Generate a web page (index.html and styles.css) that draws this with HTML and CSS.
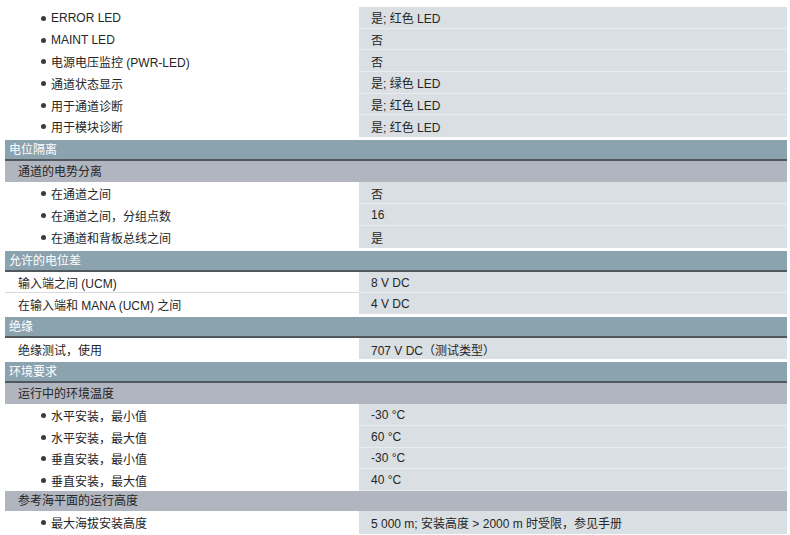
FILE: index.html
```html
<!DOCTYPE html>
<html lang="zh">
<head>
<meta charset="utf-8">
<link rel="stylesheet" href="styles.css">
</head>
<body>
<div class="sheet">
  <div class="sec first">
    <div class="row"><div class="lab bul">ERROR LED</div><div class="val">是; 红色 LED</div></div>
    <div class="row"><div class="lab bul">MAINT LED</div><div class="val">否</div></div>
    <div class="row"><div class="lab bul">电源电压监控 (PWR-LED)</div><div class="val">否</div></div>
    <div class="row"><div class="lab bul">通道状态显示</div><div class="val">是; 绿色 LED</div></div>
    <div class="row"><div class="lab bul">用于通道诊断</div><div class="val">是; 红色 LED</div></div>
    <div class="row"><div class="lab bul">用于模块诊断</div><div class="val">是; 红色 LED</div></div>
  </div>

  <div class="sec">
    <div class="head">电位隔离</div>
    <div class="sub">通道的电势分离</div>
    <div class="row r22"><div class="lab bul">在通道之间</div><div class="val">否</div></div>
    <div class="row r22"><div class="lab bul">在通道之间，分组点数</div><div class="val">16</div></div>
    <div class="row r22"><div class="lab bul">在通道和背板总线之间</div><div class="val">是</div></div>
  </div>

  <div class="sec">
    <div class="head">允许的电位差</div>
    <div class="row r21 line"><div class="lab">输入端之间 (UCM)</div><div class="val">8 V DC</div></div>
    <div class="row r21"><div class="lab">在输入端和 MANA (UCM) 之间</div><div class="val">4 V DC</div></div>
  </div>

  <div class="sec">
    <div class="head">绝缘</div>
    <div class="row r21"><div class="lab">绝缘测试，使用</div><div class="val">707 V DC（测试类型）</div></div>
  </div>

  <div class="sec">
    <div class="head">环境要求</div>
    <div class="sub">运行中的环境温度</div>
    <div class="row"><div class="lab bul">水平安装，最小值</div><div class="val">-30 °C</div></div>
    <div class="row"><div class="lab bul">水平安装，最大值</div><div class="val">60 °C</div></div>
    <div class="row"><div class="lab bul">垂直安装，最小值</div><div class="val">-30 °C</div></div>
    <div class="row"><div class="lab bul">垂直安装，最大值</div><div class="val">40 °C</div></div>
    <div class="sub s20">参考海平面的运行高度</div>
    <div class="row r23"><div class="lab bul">最大海拔安装高度</div><div class="val">5 000 m; 安装高度 &gt; 2000 m 时受限，参见手册</div></div>
  </div>
</div>
</body>
</html>
```

FILE: styles.css
```css
html, body {
  margin: 0;
  padding: 0;
  background: #ffffff;
}

body {
  font-family: "Liberation Sans", "Noto Sans CJK SC", sans-serif;
  font-size: 12px;
  color: #262626;
}

.sheet {
  width: 782px;
  margin-left: 5px;
  padding-top: 7px;
  display: flex;
  flex-direction: column;
  gap: 3px;
}

.sec {
  display: flex;
  flex-direction: column;
}

.head {
  height: 19px;
  line-height: 20px;
  background: #8ba2af;
  border-bottom: 2px solid #50575d;
  color: #ffffff;
  padding-left: 4px;
}

.sub {
  height: 21px;
  line-height: 22px;
  background: #b0b5bf;
  padding-left: 13px;
  color: #262626;
}

.sub.s20 {
  height: 20px;
  line-height: 21px;
}

.row {
  display: grid;
  grid-template-columns: 354px 428px;
  height: 21.7px;
}

.row.r22 { height: 22px; }
.row.r21 { height: 21px; }
.row.r23 { height: 23px; }

.lab {
  display: flex;
  align-items: center;
  padding-left: 13px;
  padding-top: 1px;
  white-space: nowrap;
}

.row.line .lab {
  border-bottom: 1px solid #d6dadd;
}

.lab.bul {
  padding-left: 36px;
}

.lab.bul::before {
  content: "";
  width: 5px;
  height: 5px;
  border-radius: 50%;
  background: #3a3a3a;
  margin-right: 5px;
  flex: none;
}

.val {
  display: flex;
  align-items: center;
  padding-left: 12px;
  padding-top: 1px;
  background: #dadfe3;
  border-bottom: 1px solid #e9ecee;
  white-space: nowrap;
}

.sec > .row:last-child .val {
  border-bottom: none;
}
```
